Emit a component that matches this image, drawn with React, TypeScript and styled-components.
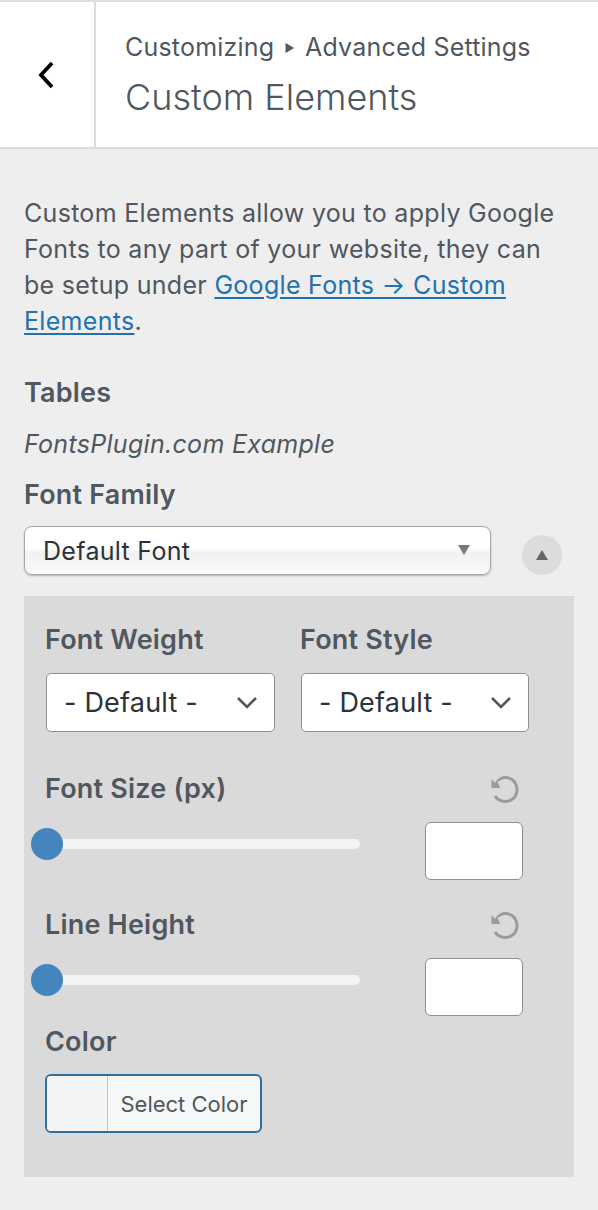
import React from "react";
import styled, { createGlobalStyle } from "styled-components";

const Global = createGlobalStyle`
  html, body { margin: 0; padding: 0; background: #eeeeee; }
  body { font-family: Inter, "Noto Sans", sans-serif; color: #50575e; }
  * { box-sizing: border-box; }
`;

const Page = styled.div`
  width: 598px;
  min-height: 1210px;
  background: #eeeeee;
`;

const Header = styled.header`
  display: flex;
  height: 149px;
  background: #fff;
  border-top: 2px solid #dddddd;
  border-bottom: 2px solid #dddddd;
`;

const BackButton = styled.button`
  width: 96px;
  flex: none;
  border: 0;
  border-right: 2px solid #dddddd;
  background: #fff;
  display: flex;
  align-items: center;
  justify-content: center;
  padding: 0 2px 0 0;
  cursor: pointer;
`;

const TitleBlock = styled.div`
  display: flex;
  flex-direction: column;
  justify-content: center;
  padding-left: 29px;
  padding-top: 2px;
`;

const Breadcrumb = styled.span`
  font-size: 25px;
  line-height: 30px;
  letter-spacing: 0.2px;
  color: #50575e;
`;

const Arrow = styled.span`
  font-size: 11px;
  vertical-align: 4px;
  margin: 0 3px;
`;

const Title = styled.h1`
  margin: 12px 0 0;
  font-size: 36px;
  line-height: 44px;
  font-weight: 300;
  color: #50575e;
`;

const Body = styled.main`
  padding: 46px 24px 35px;
`;

const Description = styled.p`
  margin: 0 0 39px;
  font-size: 25px;
  line-height: 36px;
  letter-spacing: 0.3px;
  color: #50575e;
`;

const Link = styled.a`
  color: #2271b1;
  text-decoration: underline;
  text-underline-offset: 3px;
`;

const Label = styled.div`
  font-size: 27px;
  line-height: 30px;
  font-weight: 600;
  letter-spacing: 0.2px;
  color: #50575e;
`;

const ColorLabel = styled(Label)`
  margin-top: 11px;
`;

const Example = styled.div`
  margin: 21px 0 21px;
  font-size: 25px;
  line-height: 30px;
  letter-spacing: 0.3px;
  font-style: italic;
  color: #50575e;
`;

const FamilyRow = styled.div`
  display: flex;
  align-items: center;
  margin-top: 16px;
  gap: 31px;
`;

const FamilySelect = styled.div`
  width: 467px;
  height: 49px;
  display: flex;
  align-items: center;
  justify-content: space-between;
  padding: 0 20px 0 18px;
  border: 1px solid #a7a7a7;
  border-radius: 8px;
  background: linear-gradient(#ffffff 0%, #ffffff 45%, #f1f1f1 55%, #fafafa 100%);
  box-shadow: 0 1px 2px rgba(0, 0, 0, 0.25);
  font-size: 25px;
  letter-spacing: 0.3px;
  color: #2c3338;
`;

const SmallTriangle = styled.span`
  width: 0;
  height: 0;
  border-left: 6px solid transparent;
  border-right: 6px solid transparent;
  border-top: 10px solid #7a7a7a;
  margin-bottom: 2px;
`;

const RoundToggle = styled.button`
  width: 40px;
  height: 40px;
  border-radius: 50%;
  border: 0;
  background: #dcdcdc;
  display: flex;
  align-items: center;
  justify-content: center;
  padding: 0;
  margin-top: 8px;
`;

const UpTriangle = styled.span`
  width: 0;
  height: 0;
  border-left: 6px solid transparent;
  border-right: 6px solid transparent;
  border-bottom: 10px solid #666;
`;

const Panel = styled.section`
  margin-top: 21px;
  background: #dadada;
  padding: 29px 45px 44px 21px;
  display: flex;
  flex-direction: column;
`;

const TwoCols = styled.div`
  display: grid;
  grid-template-columns: 230px 229px;
  column-gap: 25px;
`;

const Field = styled.div`
  display: flex;
  flex-direction: column;
`;

const PlainSelect = styled.div`
  margin-top: 18px;
  margin-left: 1px;
  height: 59px;
  display: flex;
  align-items: center;
  justify-content: space-between;
  padding: 0 16px 0 17px;
  background: #fff;
  border: 1px solid #8c8f94;
  border-radius: 5px;
  font-size: 27px;
  letter-spacing: 0.2px;
  color: #2c3338;
`;

const RangeControl = styled.div<{ $top: number }>`
  display: grid;
  grid-template-columns: 1fr 98px;
  align-items: start;
  padding-right: 6px;
  margin-top: ${(p) => p.$top}px;
`;

const RangeHead = styled.div`
  grid-column: 1 / 3;
  display: flex;
  align-items: center;
  justify-content: space-between;
  padding-right: 3px;
  height: 30px;
`;

const ResetButton = styled.button`
  border: 0;
  background: transparent;
  padding: 0;
  width: 30px;
  height: 30px;
  display: flex;
  align-items: center;
  justify-content: center;
`;

const SliderWrap = styled.div`
  position: relative;
  height: 32px;
  margin: 24px 65px 0 -14px;
  display: flex;
  align-items: center;
`;

const Track = styled.div`
  flex: 1;
  height: 10px;
  margin-left: 17px;
  border-radius: 5px;
  background: #f4f4f4;
`;

const Thumb = styled.div`
  position: absolute;
  left: 0;
  top: 0;
  width: 32px;
  height: 32px;
  border-radius: 50%;
  background: #4585bd;
`;

const NumberBox = styled.input`
  width: 98px;
  height: 58px;
  margin-top: 18px;
  border: 1px solid #8c8f94;
  border-radius: 6px;
  background: #fff;
  font-size: 22px;
  padding: 0 8px;
`;

const ColorButton = styled.button`
  margin-top: 17px;
  width: 217px;
  height: 59px;
  display: flex;
  align-items: stretch;
  padding: 0;
  border: 2px solid #2d6fa3;
  border-radius: 6px;
  background: #f6f7f7;
  overflow: hidden;
  cursor: pointer;
`;

const Swatch = styled.span`
  width: 61px;
  flex: none;
  background: #f3f4f6;
  border-right: 1px solid #c3c4c7;
`;

const ColorText = styled.span`
  flex: 1;
  display: flex;
  align-items: center;
  justify-content: center;
  font-family: Inter, sans-serif;
  font-size: 22px;
  color: #50575e;
`;

const Chevron = () => (
  <svg width="22" height="14" viewBox="0 0 22 14">
    <polyline points="2,2 11,11 20,2" fill="none" stroke="#50575e" strokeWidth="2.6" />
  </svg>
);

const ResetIcon = () => (
  <svg width="31" height="31" viewBox="0 0 20 20">
    <path
      fill="#9b9b9b"
      d="M10.25 1.02c5.1 0 8.75 4.04 8.75 9s-3.65 9-8.75 9c-3.2 0-6.02-1.59-7.8-4.01l1.72-1.25c1.4 1.96 3.66 3.27 6.08 3.27 4.01 0 6.75-3.25 6.75-7s-2.74-7-6.75-7c-2.04 0-3.89.84-5.25 2.2L7 9H1V3l2.42 2.42C5.1 2.72 7.5 1.02 10.25 1.02z"
    />
  </svg>
);

const Range = ({ label, top }: { label: string; top: number }) => (
  <RangeControl $top={top}>
    <RangeHead>
      <Label>{label}</Label>
      <ResetButton aria-label="Reset">
        <ResetIcon />
      </ResetButton>
    </RangeHead>
    <SliderWrap>
      <Track />
      <Thumb />
    </SliderWrap>
    <NumberBox type="text" defaultValue="" />
  </RangeControl>
);

export default function App() {
  return (
    <Page>
      <Global />
      <Header>
        <BackButton aria-label="Back">
          <svg width="20" height="30" viewBox="0 0 20 30">
            <polyline points="16,3 5,15 16,27" fill="none" stroke="#000" strokeWidth="3.8" />
          </svg>
        </BackButton>
        <TitleBlock>
          <Breadcrumb>
            Customizing <Arrow>▶</Arrow> Advanced Settings
          </Breadcrumb>
          <Title>Custom Elements</Title>
        </TitleBlock>
      </Header>
      <Body>
        <Description>
          Custom Elements allow you to apply Google Fonts to any part of your website, they can be setup
          under <Link href="#">Google Fonts → Custom Elements</Link>.
        </Description>
        <Label>Tables</Label>
        <Example>FontsPlugin.com Example</Example>
        <Label>Font Family</Label>
        <FamilyRow>
          <FamilySelect>
            <span>Default Font</span>
            <SmallTriangle />
          </FamilySelect>
          <RoundToggle aria-label="Toggle">
            <UpTriangle />
          </RoundToggle>
        </FamilyRow>
        <Panel>
          <TwoCols>
            <Field>
              <Label>Font Weight</Label>
              <PlainSelect>
                <span>- Default -</span>
                <Chevron />
              </PlainSelect>
            </Field>
            <Field>
              <Label>Font Style</Label>
              <PlainSelect>
                <span>- Default -</span>
                <Chevron />
              </PlainSelect>
            </Field>
          </TwoCols>
          <Range label="Font Size (px)" top={42} />
          <Range label="Line Height" top={30} />
          <Field>
            <ColorLabel>Color</ColorLabel>
            <ColorButton>
              <Swatch />
              <ColorText>Select Color</ColorText>
            </ColorButton>
          </Field>
        </Panel>
      </Body>
    </Page>
  );
}
